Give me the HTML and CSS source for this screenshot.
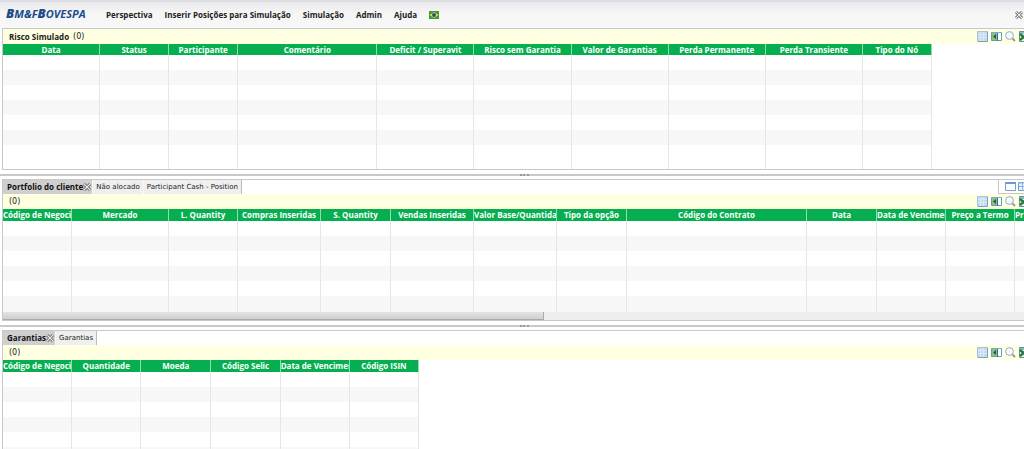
FILE: index.html
```html
<!DOCTYPE html>
<html lang="pt-BR">
<head>
<meta charset="utf-8">
<title>BM&amp;FBOVESPA</title>
<link rel="stylesheet" href="styles.css">
</head>
<body>
<svg class="defs" aria-hidden="true">
  <symbol id="grid" viewBox="0 0 11 11"><path d="M.5.5h10v10H.5z" fill="#c4daef" stroke="#a9c2dd"/><path d="M3.5 1v9M6.5 1v9M1 3.5h9M1 6.5h9" stroke="#dbe8f5"/><path d="M10.5 1v9.500H1" fill="none" stroke="#7f9fc4"/></symbol>
  <symbol id="cols" viewBox="0 0 11 11"><path d="M.5 1.500h10v8H.5z" fill="#fff" stroke="#6a97c4"/><path d="M1 2h5v7H1z" fill="#8cc083"/><path d="M5 3L2 5.500 5 8z" fill="#17652a"/><path d="M6.500 2v8" stroke="#376f9f"/><path d="M.5 1.500h10" stroke="#7eaacd"/></symbol>
  <symbol id="lens" viewBox="0 0 11 11"><circle cx="4.500" cy="4.500" r="3.900" fill="#f5faff" stroke="#8eaccc"/><path d="M7.500 7.500L10 10" stroke="#9c9a78" stroke-width="1.800"/></symbol>
  <symbol id="sheet" viewBox="0 0 11 11"><path d="M.5.5h10v10H.5z" fill="#e8f3df" stroke="#5f8fae"/><path d="M1 1h10v2H1z" fill="#8fb9cf"/><path d="M1 3l7 6M8 3L1 9" stroke="#2a7d38" stroke-width="2.400"/></symbol>
  <symbol id="window" viewBox="0 0 11 11"><path d="M.5 1.500h10v8H.5z" fill="#fff" stroke="#7f9fcc"/><path d="M0 2h11" stroke="#6f9bcc" stroke-width="2"/></symbol>
  <symbol id="table" viewBox="0 0 11 11"><path d="M.5 1.500h10v8H.5z" fill="#e7f1fb" stroke="#6f9bcc"/><path d="M0 2h11M1 5.500h9M4.500 2v8" stroke="#8db4de"/></symbol>
  <symbol id="close" viewBox="0 0 8 8"><path d="M1 1l6 6M7 1L1 7" stroke="#555" stroke-width="2.800"/><path d="M1 1l6 6M7 1L1 7" stroke="#eee" stroke-width="1.200"/></symbol>
</svg>

<header class="top">
  <div class="logo"><b>B</b>M&amp;F<b>B</b>OVESPA</div>
  <nav class="menu">
    <button>Perspectiva</button>
    <button>Inserir Posições para Simulação</button>
    <button>Simulação</button>
    <button>Admin</button>
    <button>Ajuda</button>
    <button aria-label="Português"><svg class="flag" viewBox="0 0 10 8"><path d="M0 0h10v8H0z" fill="#3c9a3f"/><path d="M5 1l4.500 3L5 7 .5 4z" fill="#e4df4a"/><circle cx="5" cy="4" r="1.900" fill="#244d86"/></svg></button>
  </nav>
  <button class="exit" aria-label="Fechar"><svg class="x"><use href="#close"/></svg></button>
</header>

<main>
<section class="panel">
  <div class="bar"><h2>Risco Simulado</h2><span>(0)</span>
    <div class="tools"><button aria-label="Grade"><svg><use href="#grid"/></svg></button><button aria-label="Colunas"><svg><use href="#cols"/></svg></button><button aria-label="Buscar"><svg><use href="#lens"/></svg></button><button aria-label="Exportar"><svg><use href="#sheet"/></svg></button></div>
  </div>
  <div class="scroll">
  <table class="w-risk">
    <colgroup><col class="c97"><col class="c69"><col class="c69"><col class="c139"><col class="c97"><col class="c97"><col class="c97"><col class="c97"><col class="c97"><col class="c69"></colgroup>
    <thead><tr><th>Data</th><th>Status</th><th>Participante</th><th>Comentário</th><th>Deficit / Superavit</th><th>Risco sem Garantia</th><th>Valor de Garantias</th><th>Perda Permanente</th><th>Perda Transiente</th><th>Tipo do Nó</th></tr></thead>
    <tbody data-rows="7"></tbody>
  </table>
  </div>
</section>
<div class="split"><i></i></div>

<section class="panel">
  <div class="tabs">
    <div class="strip">
      <button class="tab on">Portfolio do cliente <svg class="x"><use href="#close"/></svg></button>
      <button class="tab">Não alocado</button>
      <button class="tab last">Participant Cash - Position</button>
    </div>
    <div class="views"><button aria-label="Janela"><svg><use href="#window"/></svg></button><button aria-label="Tabela"><svg><use href="#table"/></svg></button></div>
  </div>
  <div class="bar"><span>(0)</span>
    <div class="tools"><button aria-label="Grade"><svg><use href="#grid"/></svg></button><button aria-label="Colunas"><svg><use href="#cols"/></svg></button><button aria-label="Buscar"><svg><use href="#lens"/></svg></button><button aria-label="Exportar"><svg><use href="#sheet"/></svg></button></div>
  </div>
  <div class="scroll">
  <table class="w-port tall">
    <colgroup><col class="c69"><col class="c97"><col class="c69"><col class="c83"><col class="c70"><col class="c83"><col class="c83"><col class="c70"><col class="c180"><col class="c70"><col class="c69"><col class="c69"><col class="c70"></colgroup>
    <thead><tr><th>Código de Negocia</th><th>Mercado</th><th>L. Quantity</th><th>Compras Inseridas</th><th>S. Quantity</th><th>Vendas Inseridas</th><th>Valor Base/Quantidad</th><th>Tipo da opção</th><th>Código do Contrato</th><th>Data</th><th>Data de Vencimen</th><th>Preço a Termo</th><th class="start">Pr</th></tr></thead>
    <tbody data-rows="6"></tbody>
  </table>
  </div>
  <div class="hbar"><i></i></div>
</section>
<div class="split"><i></i></div>

<section class="panel">
  <div class="tabs">
    <div class="strip">
      <button class="tab on">Garantias <svg class="x"><use href="#close"/></svg></button>
      <button class="tab last">Garantias</button>
    </div>
  </div>
  <div class="bar"><span>(0)</span>
    <div class="tools"><button aria-label="Grade"><svg><use href="#grid"/></svg></button><button aria-label="Colunas"><svg><use href="#cols"/></svg></button><button aria-label="Buscar"><svg><use href="#lens"/></svg></button><button aria-label="Exportar"><svg><use href="#sheet"/></svg></button></div>
  </div>
  <div class="scroll">
  <table class="w-gar tall">
    <colgroup><col class="c69"><col class="c69"><col class="c70"><col class="c69"><col class="c69"><col class="c69"></colgroup>
    <thead><tr><th>Código de Negocia</th><th>Quantidade</th><th>Moeda</th><th>Código Selic</th><th>Data de Vencimen</th><th>Código ISIN</th></tr></thead>
    <tbody data-rows="6"></tbody>
  </table>
  </div>
</section>
</main>
<script src="rows.js"></script>
</body>
</html>
```
FILE: styles.css
```css
* { box-sizing: border-box; }
body {
  margin: 0;
  height: 100vh;
  overflow: hidden;
  background: #fff;
  color: #222;
  font: 7px/10px "DejaVu Sans", Verdana, sans-serif;
}
button { margin: 0; padding: 0; border: 0; background: none; color: inherit; font: inherit; white-space: nowrap; }
svg { display: block; width: 11px; height: 11px; flex: none; }
.defs { position: absolute; width: 0; height: 0; }
svg.x { width: 8px; height: 8px; }

.top {
  display: flex;
  align-items: center;
  height: 28px;
  padding: 0 1px 1px 6px;
  border-top: 2px solid #dcdee4;
  background: linear-gradient(#e9e9ec, #f5f5f5 40%, #f8f8f8);
}
.logo { width: 100px; padding-bottom: 3px; color: #1c4c8c; font: italic bold 11px/14px "Open Sans", sans-serif; white-space: nowrap; }
.logo b { font-size: 13px; }
.menu { display: flex; align-items: center; gap: 12px; flex: 1; font: bold 8px/10px "Open Sans", sans-serif; }
svg.flag { width: 10px; height: 8px; }

.panel { margin-left: 2px; border: solid #c8c8c8; border-width: 1px 0 1px 1px; overflow: hidden; }
.bar { display: flex; align-items: center; gap: 4px; height: 15px; padding-left: 6px; background: #ffffe1; }
.bar span { font-size: 8px; }
.bar h2 { margin: 0; font: bold 8px/10px "Open Sans", sans-serif; }
.tools { display: flex; gap: 3px; margin-left: auto; margin-right: -6px; }
.tabs { display: flex; height: 14px; }
.strip { display: flex; flex: 1; }
.tab { display: flex; align-items: center; padding: 0 3px; background: #efefef; border-right: 1px solid #fafafa; }
.tab.on { padding: 0 1px 0 4px; background: #cfcfcf; color: #111; font: bold 8px/10px "Open Sans", sans-serif; }
.tab.last { border-right-color: #bbb; }
.views { display: flex; align-items: center; gap: 2px; width: 26px; padding-left: 6px; border-left: 1px solid #c8c8c8; border-bottom: 1px solid #c8c8c8; }

.scroll { overflow: hidden; }
table { table-layout: fixed; border-collapse: separate; border-spacing: 0; }
.w-risk { width: 929px; }
.w-port { width: 1082px; }
.w-gar { width: 416px; }
.c69 { width: 69px; }
.c70 { width: 70px; }
.c83 { width: 83px; }
.c97 { width: 97px; }
.c139 { width: 139px; }
.c180 { width: 180px; }
th {
  height: 11px;
  padding: 0;
  overflow: hidden;
  background: #05ae4e;
  border-right: 1px solid #8fdcae;
  color: #fff;
  font: bold 8px/10px "Open Sans", sans-serif;
  white-space: nowrap;
}
.tall th { height: 12px; }
th.start { text-align: left; }
td { height: 15px; padding: 0; border-right: 1px solid #e6e6e6; }
tr:nth-child(even) td { background: #f7f7f7; }
.w-risk tr:last-child td { height: 24px; }
.w-port tbody tr:last-child td { height: 16px; }
.hbar { height: 8px; background: #eee; }
.hbar i { display: block; width: 53%; height: 8px; background: linear-gradient(#e4e4e4, #cfcfcf); border: solid #aaa; border-width: 0 1px 1px 0; }
.split { display: flex; align-items: center; justify-content: center; height: 9px; padding-left: 24px; background: linear-gradient(#fff 4px, #c9c9c9 4px, #c9c9c9 6px, #fff 6px); }
.split i { width: 9px; border-top: 2px dotted #999; }
```
FILE: rows.js
```javascript
document.querySelectorAll("tbody[data-rows]").forEach(function (body) {
  var cols = body.parentNode.querySelectorAll("col").length;
  for (var r = 0; r < Number(body.dataset.rows); r++) {
    var row = body.insertRow();
    for (var c = 0; c < cols; c++) row.insertCell();
  }
});
```
